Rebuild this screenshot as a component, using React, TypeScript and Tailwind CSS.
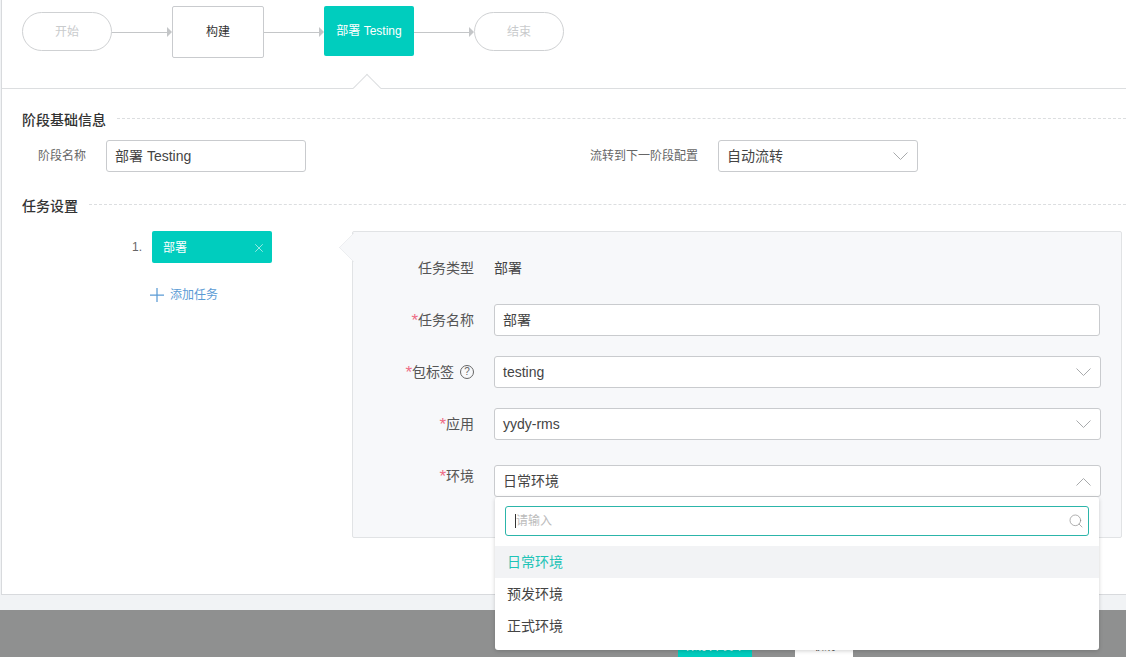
import { Search, X } from "lucide-react"
import type { ReactNode } from "react"

const font = "font-['Liberation_Sans','Noto_Sans_CJK_SC',sans-serif]"

function Arrow() {
  return (
    <div className="mt-[21px] flex w-[60px] items-center">
      <div className="h-px flex-1 bg-[#c4c6c8]" />
      <div className="h-0 w-0 border-y-[5px] border-l-[5px] border-y-transparent border-l-[#c4c6c8]" />
    </div>
  )
}

function Pill({ children }: { children: ReactNode }) {
  return (
    <div className="mt-[6px] flex h-[39px] w-[90px] items-center justify-center rounded-[20px] border border-[#cfd1d3] text-xs text-[#c9cbcd]">
      {children}
    </div>
  )
}

function SectionTitle({ children }: { children: ReactNode }) {
  return (
    <div className="flex items-center gap-[11px]">
      <h3 className="text-sm leading-5 font-medium text-[#333]">{children}</h3>
      <div className="mb-[4px] flex-1 border-t border-dashed border-[#dcdee0]" />
    </div>
  )
}

function Field({ label, required, children, className, labelClass = "" }: { label: ReactNode; required?: boolean; children: ReactNode; className: string; labelClass?: string }) {
  return (
    <div className={`flex items-center ${className}`}>
      <div className={`flex w-[121px] items-center justify-end text-sm text-[#555] ${labelClass}`}>
        {required && <span className="text-[17px] leading-none text-[#ee6d86]">*</span>}
        {label}
      </div>
      <div className="ml-5 flex-1">{children}</div>
    </div>
  )
}

function Chevron({ up }: { up?: boolean }) {
  return (
    <svg width="15" height="9" viewBox="0 0 15 9" fill="none" stroke="#a8aaac" strokeWidth="1">
      <path d={up ? "M.5 8.5l7-7 7 7" : "M.5 .5l7 7 7-7"} />
    </svg>
  )
}

function Box({ children, up, noIcon, w = "w-full" }: { children: ReactNode; up?: boolean; noIcon?: boolean; w?: string }) {
  return (
    <div className={`flex h-8 items-center justify-between rounded-[3px] border border-[#c9cbce] bg-white pr-[9px] pl-[8px] text-sm text-[#444] ${w}`}>
      <span>{children}</span>
      {!noIcon && <Chevron up={up} />}
    </div>
  )
}

export default function App() {
  return (
    <div className={`relative flex h-[657px] w-[1126px] flex-col overflow-hidden bg-[#f1f3f5] ${font}`}>
      <div className="ml-px h-[595px] shrink-0 border-b border-l border-[#d8dadd] bg-white">
        <div className="relative flex h-[89px] items-start border-b border-[#dcdee0] pt-[6px] pl-[20px]">
          <Pill>开始</Pill>
          <Arrow />
          <div className="flex h-[52px] w-[92px] items-center justify-center rounded-[2px] border border-[#c9cbce] text-xs text-[#333]">构建</div>
          <Arrow />
          <div className="flex h-[50px] w-[90px] items-center justify-center rounded-[2px] bg-[#00cdbe] text-xs text-white">部署 Testing</div>
          <Arrow />
          <Pill>结束</Pill>
          <div className="absolute top-[78px] left-[355px] h-5 w-5 rotate-45 border-t border-l border-[#dcdee0] bg-white" />
        </div>

        <div className="pt-[21px] pl-[20px]">
          <SectionTitle>阶段基础信息</SectionTitle>
          <div className="mt-[10px] flex items-center text-xs text-[#666]">
            <div className="ml-4 w-[68px]">阶段名称</div>
            <Box noIcon w="w-[200px]">部署 Testing</Box>
            <div className="ml-[284px] w-[128px]">流转到下一阶段配置</div>
            <Box w="w-[200px]">自动流转</Box>
          </div>

          <div className="mt-6">
            <SectionTitle>任务设置</SectionTitle>
          </div>

          <div className="mt-[15px] flex items-start">
            <div className="w-[330px] shrink-0">
              <div className="flex items-start">
                <span className="mt-[8px] ml-[110px] w-5 text-xs text-[#666]">1.</span>
                <div className="flex h-8 w-[120px] items-center justify-between rounded-[2px] bg-[#00cdbe] pt-px pr-[7px] pl-[11px] text-xs text-white">
                  部署
                  <X size={14} strokeWidth={1} className="-mr-[1px]" />
                </div>
              </div>
              <div className="mt-6 ml-[128px] flex items-center gap-[6px] text-xs text-[#5b9bd5]">
                <svg width="14" height="14" viewBox="0 0 14 14" fill="none" stroke="#5b9bd5" strokeWidth="1.25">
                  <path d="M7 0v14M0 7h14" />
                </svg>
                添加任务
              </div>
            </div>

            <div className="relative mr-1 h-[307px] flex-1 rounded-[2px] border border-[#e1e3e5] bg-[#f7f8fa] pt-[26px]">
              <div className="absolute top-[5px] left-[-10px] h-[21px] w-[21px] rotate-45 rounded-[1px] border-b border-l border-[#e9ebed] bg-[#f7f8fa]" />
              <div className="relative flex h-5 items-center">
                <div className="w-[121px] text-right text-sm text-[#555]">任务类型</div>
                <div className="ml-5 text-sm text-[#444]">部署</div>
              </div>
              <Field required label="任务名称" className="mt-[26px] mr-[21px]">
                <Box noIcon>部署</Box>
              </Field>
              <Field
                required
                label={
                  <>
                    包标签
                    <span className="ml-[6px] flex h-[14px] w-[14px] items-center justify-center rounded-full border border-[#666] text-[10px] leading-none text-[#666]">?</span>
                  </>
                }
                className="mt-5 mr-5"
              >
                <Box>testing</Box>
              </Field>
              <Field required label="应用" className="mt-5 mr-5">
                <Box>yydy-rms</Box>
              </Field>
              <Field required label="环境" labelClass="mb-[10px]" className="mt-[25px] mr-5">
                <Box up>日常环境</Box>
              </Field>
            </div>
          </div>
        </div>
      </div>

      <div className="mt-[15px] flex flex-1 items-start bg-[#8f9090] pt-[20px]">
        <div className="ml-[678px] flex h-8 w-[74px] items-center justify-center bg-[#00cdbe] text-xs text-white">保存并发布</div>
        <div className="ml-[43px] flex h-8 w-[58px] items-center justify-center bg-white text-xs text-[#444]">取消</div>
      </div>

      <div className="absolute top-[497px] left-[495px] h-[153px] w-[604px] rounded-[3px] bg-white shadow-[0_1px_4px_rgba(0,0,0,0.18)]">
        <div className="px-[10px] pt-[9px]">
          <div className="flex h-[30px] items-center justify-between rounded-[3px] border border-[#2cb5aa] pr-[4px] pl-[9px] text-xs text-[#bbb]">
            <span className="border-l border-[#333] leading-[14px]">请输入</span>
            <Search size={16} strokeWidth={1} className="text-[#888]" />
          </div>
        </div>
        <div className="mt-[10px] text-sm">
          <div className="flex h-8 items-center bg-[#f2f3f5] pl-3 text-[#1fc4b7]">日常环境</div>
          <div className="flex h-8 items-center pl-3 text-[#444]">预发环境</div>
          <div className="flex h-8 items-center pl-3 text-[#444]">正式环境</div>
        </div>
      </div>
    </div>
  )
}
